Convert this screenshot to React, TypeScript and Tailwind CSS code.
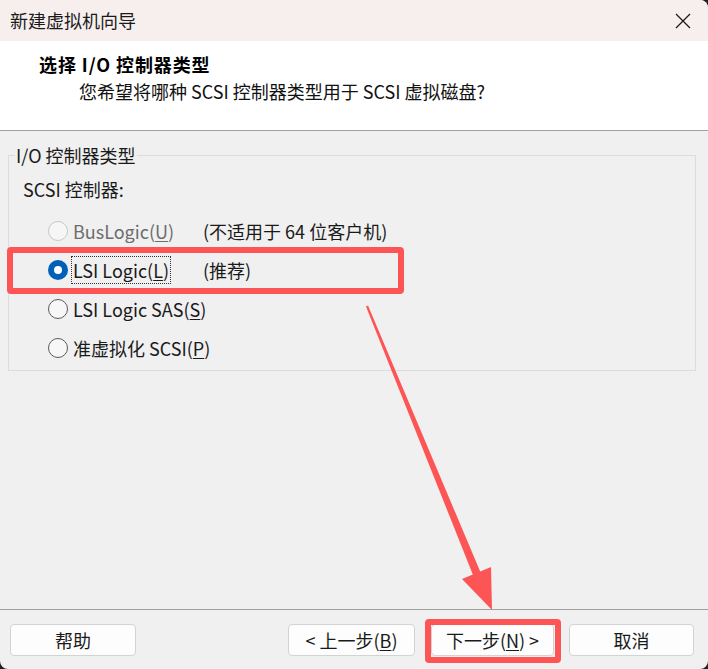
import React from "react";

const F = { fontFamily: '"Noto Sans CJK SC", "Noto Sans", sans-serif' };

function U({ children }: { children: React.ReactNode }) {
  return <span className="underline underline-offset-2 decoration-1">{children}</span>;
}

function Radio({ state }: { state: "off" | "on" | "disabled" }) {
  if (state === "on")
    return (
      <span className="w-[20px] h-[20px] rounded-full bg-[#005fb8] flex items-center justify-center shrink-0">
        <span className="w-[8px] h-[8px] rounded-full bg-white" />
      </span>
    );
  if (state === "disabled")
    return <span className="w-[20px] h-[20px] rounded-full border border-[#c8c8c8] bg-[#f6f6f6] shrink-0" />;
  return <span className="w-[20px] h-[20px] rounded-full border border-[#5a5a5a] bg-[#f7f7f7] shrink-0" />;
}

function Btn({ children, cls = "" }: { children: React.ReactNode; cls?: string }) {
  return (
    <div
      className={`h-[32px] rounded-[4px] border border-[#d3d3d3] bg-[#fdfdfd] flex items-center justify-center text-[18px] text-[#1a1a1a] ${cls}`}
    >
      {children}
    </div>
  );
}

export default function App() {
  return (
    <div className="w-[708px] h-[669px] bg-[#202020] relative overflow-hidden" style={F}>
      <div className="w-full h-full bg-[#f0f0f0] rounded-tr-[8px] rounded-b-[8px] overflow-hidden flex flex-col">
        {/* title bar */}
        <div className="h-[41px] bg-[#f7efee] flex items-center justify-between pl-[10px] pr-[16px] shrink-0">
          <span className="text-[18px] text-[#1a1a1a]">新建虚拟机向导</span>
          <svg width="16" height="16" viewBox="0 0 16 16" className="mr-[1px]">
            <path d="M1 1 L15 15 M15 1 L1 15" stroke="#1a1a1a" strokeWidth="1.3" fill="none" />
          </svg>
        </div>
        {/* header */}
        <div className="h-[89px] bg-white shrink-0 flex flex-col pt-[10px]">
          <div className="pl-[39px] text-[18px] font-bold text-black leading-[26px] tracking-[0.9px]">选择 I/O 控制器类型</div>
          <div className="pl-[79px] text-[18px] text-[#111] leading-[26px] mt-[1px]">
            您希望将哪种 SCSI 控制器类型用于 SCSI 虚拟磁盘?
          </div>
        </div>
        <div className="h-[1px] bg-[#a0a0a0] shrink-0" />
        {/* body */}
        <div className="flex-1 relative px-[8px] pt-[14px]">
          <div className="relative border border-[#dcdcdc] w-[688px] h-[216px] mt-[10px]">
            <div className="absolute left-[6px] top-[-14px] bg-[#f0f0f0] px-[1px] text-[18px] text-[#1a1a1a] leading-[26px]">
              I/O 控制器类型
            </div>
            <div className="pl-[14px] pt-[20px] text-[18px] text-[#1a1a1a] leading-[26px]">SCSI 控制器:</div>
            <div className="flex flex-col mt-[9px] text-[18px] leading-[26px]">
              <div className="h-[39px] flex items-center pl-[39px]">
                <Radio state="disabled" />
                <span className="ml-[5px] w-[130px] text-[#6d6d6d]">
                  BusLogic(<U>U</U>)
                </span>
                <span className="text-[#1a1a1a]">(不适用于 64 位客户机)</span>
              </div>
              <div className="h-[39px] flex items-center pl-[39px]">
                <Radio state="on" />
                <span className="ml-[4px] w-[131px]">
                  <span className="outline outline-1 outline-dotted outline-[#333] px-[1px] text-[#1a1a1a]">
                    LSI Logic(<U>L</U>)
                  </span>
                </span>
                <span className="text-[#1a1a1a]">(推荐)</span>
              </div>
              <div className="h-[39px] flex items-center pl-[39px]">
                <Radio state="off" />
                <span className="ml-[5px] text-[#1a1a1a]">
                  LSI Logic SAS(<U>S</U>)
                </span>
              </div>
              <div className="h-[39px] flex items-center pl-[39px]">
                <Radio state="off" />
                <span className="ml-[5px] text-[#1a1a1a]">
                  准虚拟化 SCSI(<U>P</U>)
                </span>
              </div>
            </div>
          </div>
        </div>
        <div className="h-[1px] bg-[#a0a0a0] shrink-0" />
        {/* footer */}
        <div className="h-[59px] shrink-0 flex items-start pt-[14px] pl-[10px] pr-[14px]">
          <Btn cls="w-[126px]">帮助</Btn>
          <div className="flex-1" />
          <Btn cls="w-[127px]">
            &lt; 上一步(<U>B</U>)
          </Btn>
          <Btn cls="w-[123px] ml-[16px]">
            下一步(<U>N</U>) &gt;
          </Btn>
          <Btn cls="w-[125px] ml-[15px]">取消</Btn>
        </div>
      </div>
      {/* annotations */}
      <div className="absolute left-[7px] top-[247px] w-[397px] h-[47px] border-[6px] border-[#fd5555] rounded-[4px]" />
      <div className="absolute left-[425px] top-[619px] w-[136px] h-[44px] border-[6px] border-[#fd5555] rounded-[4px]" />
      <svg className="absolute left-0 top-0" width="708" height="669" viewBox="0 0 708 669">
        <polygon
          points="366,306.4 368,305.6 480.2,571.5 491,567 492,610 462,579 472.8,574.5"
          fill="#fd5555"
        />
      </svg>
    </div>
  );
}
